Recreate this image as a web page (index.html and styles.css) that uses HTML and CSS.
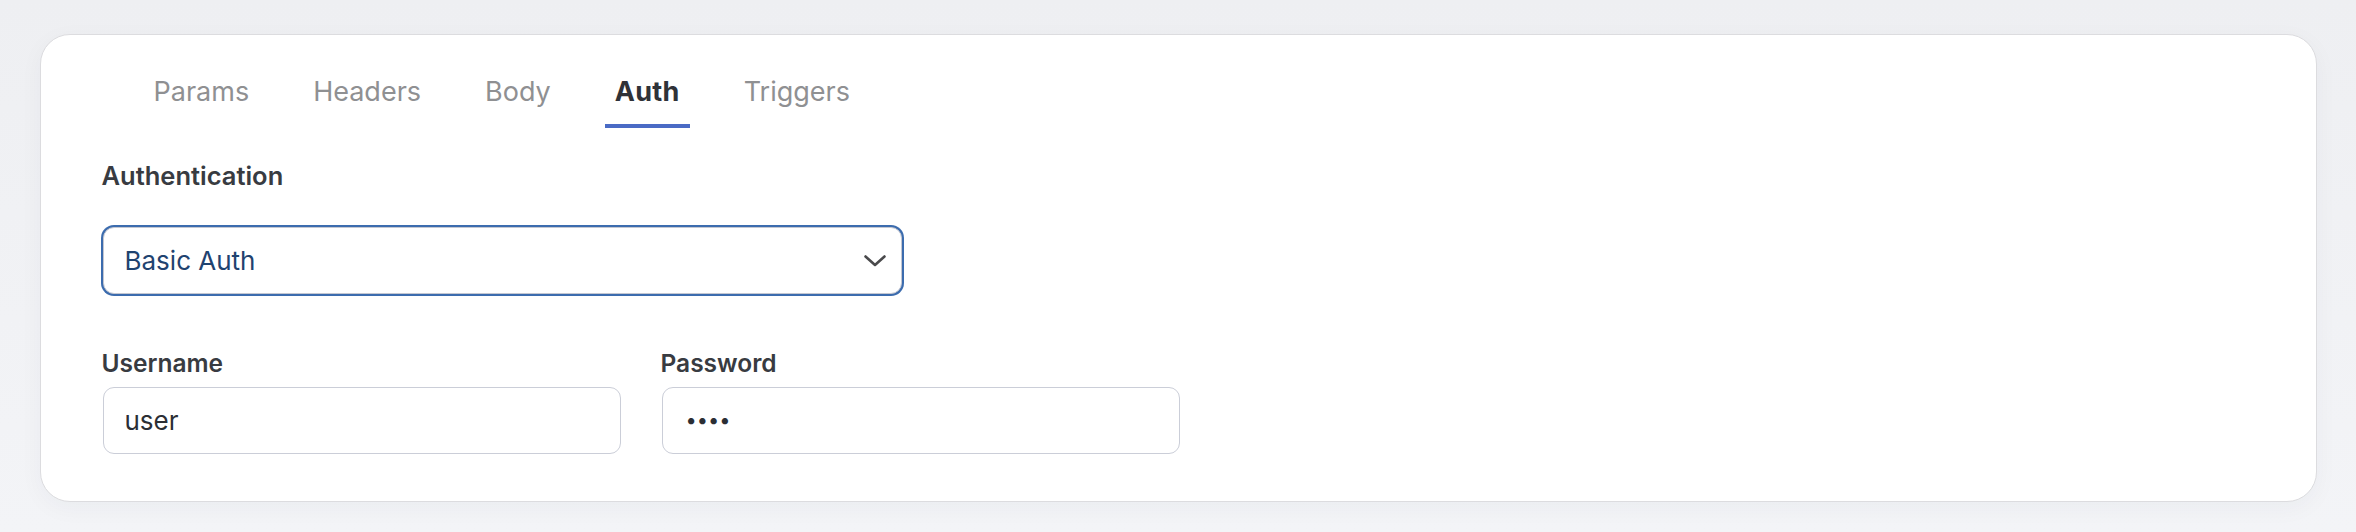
FILE: index.html
```html
<!DOCTYPE html>
<html lang="en">
<head>
<meta charset="utf-8">
<title>Auth</title>
<link rel="stylesheet" href="styles.css">
</head>
<body>
<div class="card">
  <nav class="tabs">
    <span class="tab">Params</span>
    <span class="tab">Headers</span>
    <span class="tab">Body</span>
    <span class="tab active">Auth</span>
    <span class="tab">Triggers</span>
  </nav>
  <label class="label label-lg" for="auth-type">Authentication</label>
  <div class="select-wrap">
    <select id="auth-type" class="select">
      <option>Basic Auth</option>
    </select>
    <svg class="chevron" width="22" height="12" viewBox="0 0 22 12" aria-hidden="true">
      <path d="M1.5 1.5 L11 10 L20.5 1.5" fill="none" stroke="#4a4a4c" stroke-width="2.6" stroke-linecap="round" stroke-linejoin="round"/>
    </svg>
  </div>
  <div class="fields">
    <div class="field">
      <label class="label" for="username">Username</label>
      <input id="username" class="input" type="text" value="user">
    </div>
    <div class="field">
      <label class="label" for="password">Password</label>
      <input id="password" class="input input-secret" type="password" value="pass">
    </div>
  </div>
</div>
</body>
</html>
```

FILE: styles.css
```css
html, body {
  margin: 0;
  padding: 0;
}
body {
  background: linear-gradient(180deg, #eeeff2 0%, #f3f4f7 100%);
  font-family: Inter, "Noto Sans", "Liberation Sans", sans-serif;
  min-height: 532px;
  overflow: hidden;
}
.card {
  margin: 34px 39px 0 40px;
  background: #ffffff;
  border: 1.5px solid #dcdcdf;
  border-radius: 30px;
  box-shadow: 0 6px 24px rgba(30, 40, 70, 0.04);
  padding: 39px 60px 47px 60.5px;
}
.tabs {
  display: flex;
  gap: 44px;
  margin-left: 42px;
}
.tab {
  font-size: 27px;
  line-height: 36px;
  color: #8f9092;
  padding: 0 10px 13.5px;
  border-bottom: 4px solid transparent;
}
.tab.active {
  color: #2f3238;
  font-weight: 700;
  letter-spacing: 0.3px;
  border-bottom-color: #4a6bc5;
}
.label {
  display: block;
  font-size: 24.5px;
  line-height: 32px;
  font-weight: 600;
  color: #383b41;
}
.label-lg {
  font-size: 25.5px;
  margin-top: 32.5px;
}
.select-wrap {
  position: relative;
  width: 799px;
  margin: 34.5px 0 0 1px;
}
.select {
  appearance: none;
  -webkit-appearance: none;
  display: block;
  width: 100%;
  height: 67px;
  box-sizing: border-box;
  border: 1.5px solid #c4c7d1;
  border-radius: 11px;
  box-shadow: 0 0 0 2px #3c6cae;
  background: #ffffff;
  padding: 0 50px 0 21px;
  font-family: inherit;
  font-size: 26px;
  color: #1f4370;
  outline: none;
}
.chevron {
  position: absolute;
  right: 16px;
  top: 28px;
}
.fields {
  display: grid;
  grid-template-columns: 518px 518px;
  column-gap: 41px;
  margin-top: 53.5px;
}
.field .label {
  margin-bottom: 7.5px;
}
.input {
  display: block;
  width: 100%;
  height: 67px;
  box-sizing: border-box;
  margin-left: 1px;
  border: 1.5px solid #cbced8;
  border-radius: 11px;
  background: #ffffff;
  padding: 0 21px;
  font-family: inherit;
  font-size: 26px;
  color: #2b2e34;
  outline: none;
}
.input-secret {
  font-size: 20px;
  padding-left: 23px;
}
```
